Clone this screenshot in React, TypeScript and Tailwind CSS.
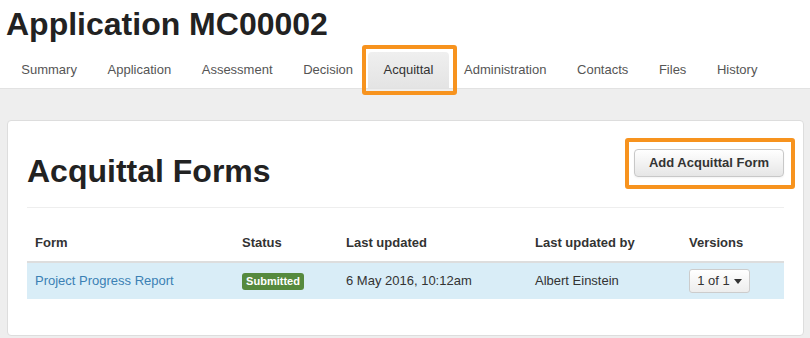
import { useState } from 'react';

const tabs = [
  'Summary',
  'Application',
  'Assessment',
  'Decision',
  'Acquittal',
  'Administration',
  'Contacts',
  'Files',
  'History',
];

// Orange annotation box that sits over an element
function Highlight({ className }: { className: string }) {
  return (
    <span
      className={`pointer-events-none absolute rounded-[3px] border-4 border-[#f7931e] ${className}`}
    />
  );
}

export default function App() {
  const [active] = useState('Acquittal');

  return (
    <div className="min-h-[338px] bg-[#eeeeee] font-['Liberation_Sans',Arial,sans-serif] text-[13px] text-[#333]">
      {/* Header */}
      <div className="bg-white pt-[6px]">
        <h1 className="pl-[6px] text-[32px] font-bold leading-[36px] text-[#222]">
          Application MC00002
        </h1>
        <nav className="mt-[10px] flex pl-[6px]">
          {tabs.map((tab) =>
            tab === active ? (
              <div key={tab} className="relative">
                <a className="block h-[36px] rounded-t-[4px] bg-gradient-to-b from-[#efefef] to-[#e4e4e4] px-[15.3px] leading-[36px] text-[#333]">
                  {tab}
                </a>
                <Highlight className="-left-[6px] -right-[8px] -top-[7px] -bottom-[7px]" />
              </div>
            ) : (
              <a key={tab} className="block h-[36px] px-[15.3px] leading-[36px] text-[#555]">
                {tab}
              </a>
            )
          )}
        </nav>
      </div>

      {/* Content */}
      <div className="border-t border-[#e2e2e2] pt-[31px] pb-[4px]">
        <div className="ml-[7px] mr-[6px] rounded-[4px] border border-[#dddddd] bg-white px-[19px] pt-[28px] pb-[36px]">
          <div className="flex items-start justify-between">
            <h2 className="mt-[4px] text-[32px] font-bold leading-[36px] text-[#222]">
              Acquittal Forms
            </h2>
            <div className="relative">
              <button className="h-[28px] w-[150px] rounded-[4px] border border-[#c8c8c8] bg-gradient-to-b from-white to-[#e6e6e6] text-[13px] font-bold text-[#333] shadow-[inset_0_1px_0_rgba(255,255,255,0.2),0_1px_2px_rgba(0,0,0,0.05)]">
                Add Acquittal Form
              </button>
              <Highlight className="-left-[9px] -right-[11px] -top-[11px] -bottom-[12px]" />
            </div>
          </div>

          <div className="mt-[18px] border-t border-[#eeeeee]" />

          <table className="mt-[17px] w-full border-collapse text-left">
            <thead>
              <tr className="border-b-2 border-[#dddddd]">
                <th className="w-[207px] px-[8px] py-[8px] font-bold leading-[20px]">Form</th>
                <th className="w-[104px] px-[8px] py-[8px] font-bold leading-[20px]">Status</th>
                <th className="w-[189px] px-[8px] py-[8px] font-bold leading-[20px]">Last updated</th>
                <th className="w-[154px] px-[8px] py-[8px] font-bold leading-[20px]">Last updated by</th>
                <th className="px-[8px] py-[8px] font-bold leading-[20px]">Versions</th>
              </tr>
            </thead>
            <tbody>
              <tr className="bg-[#d9edf7]">
                <td className="px-[8px] py-[8px] leading-[20px]">
                  <a className="text-[#3b80b4]">Project Progress Report</a>
                </td>
                <td className="px-[8px] py-[8px] leading-[20px]">
                  <span className="inline-flex h-[17px] w-[62px] items-center justify-center rounded-[3px] bg-[#568a3e] text-[11px] font-bold text-white">
                    Submitted
                  </span>
                </td>
                <td className="px-[8px] py-[8px] leading-[20px]">6 May 2016, 10:12am</td>
                <td className="px-[8px] py-[8px] leading-[20px]">Albert Einstein</td>
                <td className="px-[8px] py-[2px] leading-[20px]">
                  <button className="flex h-[24px] w-[61px] items-center justify-center gap-[4px] rounded-[3px] border border-[#cccccc] bg-gradient-to-b from-white to-[#ededed] text-[13px] text-[#333]">
                    1 of 1
                    <svg width="8" height="5" viewBox="0 0 8 5" className="mt-[1px]">
                      <path d="M0 0h8L4 5z" fill="#333" />
                    </svg>
                  </button>
                </td>
              </tr>
            </tbody>
          </table>
        </div>
      </div>
    </div>
  );
}
